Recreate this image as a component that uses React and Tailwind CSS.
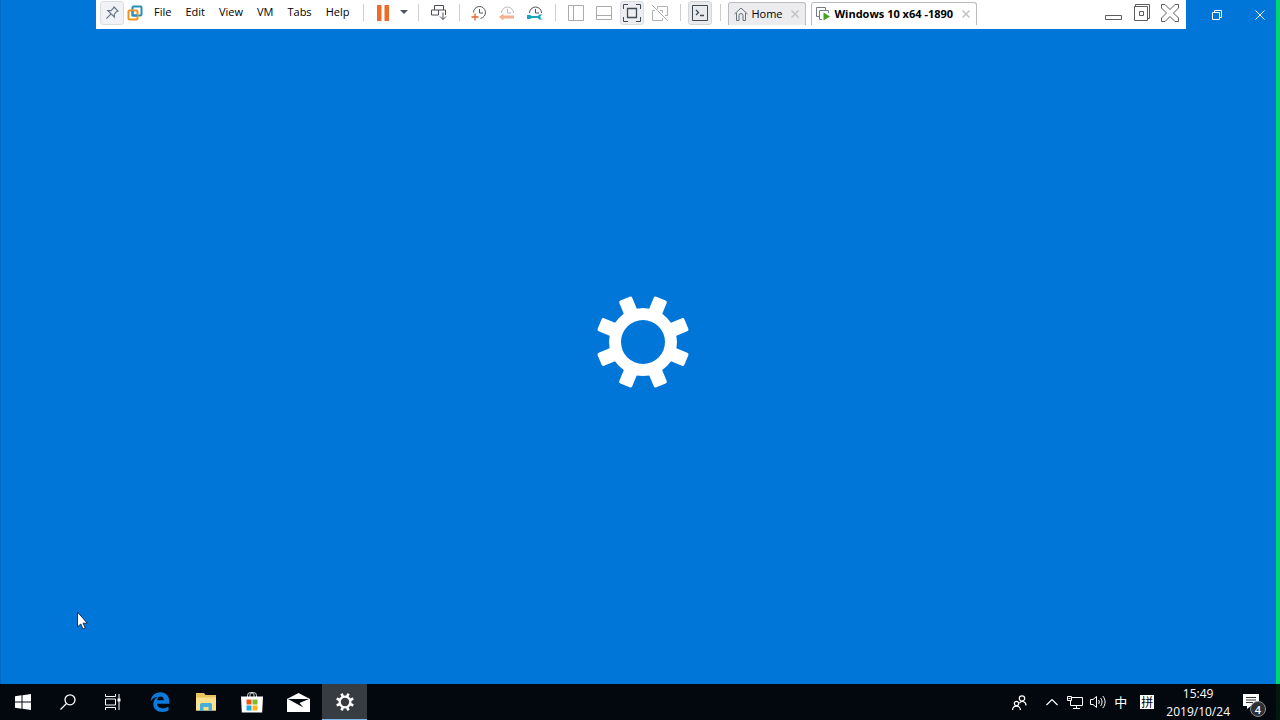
const MENUS = ["File", "Edit", "View", "VM", "Tabs", "Help"];

function Gear({ size }) {
  return (
    <svg width={size} height={size} viewBox="-47 -47 94 94" fill="none">
      <mask id={`hole-${size}`} maskUnits="userSpaceOnUse" x="-47" y="-47" width="94" height="94">
        <rect x="-47" y="-47" width="94" height="94" fill="#fff" />
        <circle r="22" fill="#000" />
      </mask>
      <g fill="#fff" mask={`url(#hole-${size})`}>
        <circle r="34" />
        <rect x="-7" y="-47" width="14" height="94" rx="2" transform="rotate(22.5)" />
        <rect x="-7" y="-47" width="14" height="94" rx="2" transform="rotate(67.5)" />
        <rect x="-7" y="-47" width="14" height="94" rx="2" transform="rotate(112.5)" />
        <rect x="-7" y="-47" width="14" height="94" rx="2" transform="rotate(157.5)" />
      </g>
    </svg>
  );
}

function Divider() {
  return <span className="h-[17px] w-px shrink-0 bg-[#cfcfcf]" />;
}

function Tool({ label, className = "w-7", children }) {
  return (
    <button
      type="button"
      aria-label={label}
      className={`flex h-6 shrink-0 items-center justify-center ${className}`}
    >
      {children}
    </button>
  );
}

function TabClose() {
  return (
    <button type="button" aria-label="Close tab" className="flex size-4 items-center justify-center">
      <svg width="8" height="8" viewBox="0 0 8 8" stroke="#c2c2c2" strokeWidth="1.5">
        <path d="M.5.5l7 7M7.5.5l-7 7" />
      </svg>
    </button>
  );
}

function Toolbar() {
  return (
    <div className="flex h-[29px] min-w-0 flex-1 items-center bg-white pb-1 pl-1 font-['Open_Sans','Noto_Sans',sans-serif] text-[11px] text-black">
      <Tool label="Pin toolbar" className="w-6 rounded-[3px] border border-[#dcdde1] bg-[#f1f2f5]">
        <svg width="14" height="14" viewBox="0 0 14 14" fill="none" stroke="#66758a" strokeWidth="1.2">
          <path d="M9 1l4 4-1.5.7-2.2 2.4.1 3L2.9 4.600l3 .1L8.200 2.500zM5.800 8.200L1.300 12.700" />
        </svg>
      </Tool>
      <span className="flex w-[22px] justify-center">
        <svg width="16" height="16" viewBox="0 0 16 16" fill="none" strokeWidth="2">
          <rect x="5.5" y="1.5" width="9" height="9" rx="1" stroke="#2d8cba" />
          <rect x="1.5" y="5.500" width="9" height="9" rx="1" stroke="#f0941e" />
          <path d="M5.500 6v4.500H10" stroke="#2d8cba" />
        </svg>
      </span>
      <nav className="flex gap-3.5 pr-3.5 pl-2">
        {MENUS.map(menu => (
          <button type="button" key={menu}>
            {menu}
          </button>
        ))}
      </nav>
      <Divider />
      <Tool label="Suspend" className="w-[38px]">
        <svg width="12" height="16" viewBox="0 0 12 16" fill="#ee6b2b">
          <path d="M0 0h4.500v16H0zM7.500 0H12v16H7.500z" />
        </svg>
      </Tool>
      <Tool label="Power options" className="w-4 justify-start pb-px">
        <svg width="8" height="4" viewBox="0 0 8 4" fill="#4c5560" className="-ml-0.5">
          <path d="M0 0h8L4 4z" />
        </svg>
      </Tool>
      <Divider />
      <Tool label="Send Ctrl+Alt+Del" className="w-10">
        <svg width="16" height="16" viewBox="0 0 16 16" fill="none" stroke="#4b4b57">
          <path d="M3.500 5V.500h9V5M.500 5h7v5h-7zM7.500 5h7v5M12 7.500v7M9 11.500l3 3 3-3" />
        </svg>
      </Tool>
      <Divider />
      <span className="w-[5px]" />
      <Tool label="Take snapshot">
        <svg width="16" height="16" viewBox="0 0 16 16" fill="none">
          <path d="M2.500 7.500A6 6 0 1 1 9.500 13.400M8.500 4v4H12" stroke="#555a60" />
          <path d="M4 8.500v7M.500 12h7" stroke="#e2622c" strokeWidth="1.3" />
        </svg>
      </Tool>
      <Tool label="Revert snapshot">
        <svg width="16" height="16" viewBox="0 0 16 16" fill="none">
          <path d="M2.500 8a6 6 0 0 1 12 0M8.500 4v4H12" stroke="#b5b7ba" />
          <path d="M0 12l4.500-3.500v2H15v3H4.500v2z" fill="#f4b091" />
        </svg>
      </Tool>
      <Tool label="Manage snapshots">
        <svg width="16" height="16" viewBox="0 0 16 16" fill="none">
          <path d="M2.500 8a6 6 0 0 1 12 0M8.500 4v4H12" stroke="#4b5058" />
          <path d="M0 10h3l2 1h6l1-1.500h3.500l-2 1.500v2l2 1.500H12l-1-1.500H5l-2 1H0z" fill="#1aa5bd" />
        </svg>
      </Tool>
      <span className="w-1.5" />
      <Divider />
      <span className="w-1.5" />
      <Tool label="Show library">
        <svg width="16" height="16" viewBox="0 0 16 16" fill="none" stroke="#a9abae">
          <path d="M.500.500h15v15H.500zM5.500.500v15" />
        </svg>
      </Tool>
      <Tool label="Show thumbnail bar">
        <svg width="16" height="16" viewBox="0 0 16 16" fill="none" stroke="#a9abae">
          <path d="M.500 1.500h15v13H.500zM.500 10.500h15" />
        </svg>
      </Tool>
      <span className="w-0.5" />
      <Tool label="Full screen" className="w-6 rounded-[3px] border border-[#dcdde1] bg-[#eceef1]">
        <svg width="18" height="18" viewBox="0 0 18 18" fill="none" stroke="#414b55">
          <path d="M.500 5V.500H5M13 .500h4.500V5M17.500 13v4.500H13M5 17.500H.500V13" />
          <path d="M4.500 4.500h9v9h-9z" strokeWidth="1.3" />
        </svg>
      </Tool>
      <span className="w-0.5" />
      <Tool label="Unity">
        <svg width="16" height="16" viewBox="0 0 16 16" fill="none" stroke="#aeb0b2">
          <path d="M5.500 4V1.500h10v9H13M3 5.500H.500v10h10V13M8 5.500h2.500V8M0 0l16 16" />
        </svg>
      </Tool>
      <span className="w-1.5" />
      <Divider />
      <span className="w-[7px]" />
      <Tool label="Console view" className="w-6 rounded-[3px] border border-[#d3d5d9] bg-[#e8eaee]">
        <svg width="16" height="16" viewBox="0 0 16 16" fill="none" stroke="#3f4a54">
          <path d="M.500.500h15v15H.500z" />
          <path d="M4 5l2.500 2.500L4 10M8 10.500h4" strokeWidth="1.3" />
        </svg>
      </Tool>
      <span className="w-2" />
      <Divider />
      <div className="ml-[7px] flex shrink-0 gap-[5px] self-end">
        <div className="flex h-[23px] w-[78px] items-center rounded-t-[3px] border border-b-0 border-[#b9bbc0] bg-[#ececef] pl-[5px]">
          <svg width="14" height="14" viewBox="0 0 14 14" fill="none" stroke="#67717b">
            <path d="M.500 7L7 1l6.500 6M2.500 6v7.500H5v-5a2 2 0 0 1 4 0v5h2.500V6" />
          </svg>
          <button type="button" className="flex-1 pl-[3px] text-left">Home</button>
          <TabClose />
          <span className="w-0.5" />
        </div>
        <div className="flex h-[23px] w-[166px] items-center rounded-t-[3px] border border-b-0 border-[#b9bbc0] bg-white pl-1">
          <svg width="15" height="14" viewBox="0 0 15 14" fill="none" stroke="#747d86">
            <path d="M3 9.500H.500v-9h9V3M12.500 6V3.500h-9v9H6" />
            <path d="M7.500 5.500v8l6.500-4z" fill="#3fa41c" stroke="none" />
          </svg>
          <button type="button" className="flex-1 pl-[3px] text-left font-bold whitespace-nowrap">
            Windows 10 x64 -1890
          </button>
          <TabClose />
          <span className="w-0.5" />
        </div>
      </div>
      <div className="ml-auto flex pr-0.5">
        <Tool label="Minimize">
          <svg width="18" height="18" viewBox="0 0 18 18" fill="none" stroke="#5d5d5d">
            <path d="M.500 11.500h16v4H.500z" />
          </svg>
        </Tool>
        <Tool label="Restore">
          <svg width="18" height="18" viewBox="0 0 18 18" fill="none" stroke="#5d5d5d">
            <path d="M1.500 2.500h13v14h-13zM6.500 7.500h4v4h-4zM2.500 2.500v-2h14v14h-2" />
          </svg>
        </Tool>
        <Tool label="Close">
          <svg width="18" height="18" viewBox="0 0 18 18" fill="none" stroke="#5d5d5d">
            <path d="M.500.500H4l5 5 5-5h3.500V4l-5 5 5 5v3.500H14l-5-5-5 5H.500V14l5-5-5-5z" />
          </svg>
        </Tool>
      </div>
    </div>
  );
}

function Cursor() {
  return (
    <svg width="12" height="19" viewBox="0 0 12 19" className="absolute bottom-[54px] left-[75px]">
      <path d="M1.500 1v15l3.300-3 2.200 5 2.300-1-2.200-4.800h4.200z" fill="#fff" stroke="#17324d" />
    </svg>
  );
}

function TaskButton({ label, className = "w-[46px]", children }) {
  return (
    <button type="button" aria-label={label} className={`flex h-9 items-center justify-center ${className}`}>
      {children}
    </button>
  );
}

function Taskbar() {
  return (
    <footer className="flex h-9 items-center border-r-4 border-[#03190f] bg-[#03080f] text-white">
      <TaskButton label="Start" className="w-[45px]">
        <svg width="16" height="16" viewBox="0 0 16 16" fill="#fff">
          <path d="M0 2.300l6.500-1v6.200H0zM7.500 1.200L16 0v7.500H7.500zM0 8.500h6.500v6.200l-6.500-1zM7.500 8.500H16V16l-8.500-1.200z" />
        </svg>
      </TaskButton>
      <TaskButton label="Search" className="w-[45px]">
        <svg width="16" height="16" viewBox="0 0 16 16" fill="none" stroke="#fff" strokeWidth="1.3">
          <circle cx="10" cy="5.800" r="5" />
          <path d="M6.500 9.500l-6 6" />
        </svg>
      </TaskButton>
      <TaskButton label="Task View" className="w-[45px]">
        <svg width="16" height="16" viewBox="0 0 16 16" fill="none" stroke="#fff">
          <path d="M.500 0v2.500h10V0M.500 5h10v6H.500zM.500 16v-2.500h10V16M14 0v16" />
          <path d="M12.500 4.500h3v3h-3z" fill="#fff" stroke="none" />
        </svg>
      </TaskButton>
      <div className="ml-0.5 flex">
        <TaskButton label="Microsoft Edge">
          <svg width="20" height="20" viewBox="0 0 20 20" fill="#0a7bdc">
            <path d="M.7 9.200C1.200 4 5 .3 10.300.3c5.700 0 9 4 9 9.200v2.200H7c.2 3.300 3 4.500 6 4.500 2.100 0 4-.6 5.500-1.500v3.900c-1.700.9-3.700 1.300-6 1.300-5.500 0-9.200-3.100-9.200-8 0-3.200 1.800-5.800 4.600-7.200C4.800 5 2.300 6.500.7 9.200zM7.200 8.200h6.600c0-2.200-1.100-3.700-3.200-3.700S7.400 6 7.200 8.200z" />
          </svg>
        </TaskButton>
        <TaskButton label="File Explorer">
          <svg width="20" height="18" viewBox="0 0 20 18">
            <path d="M0 0h8l1.500 2H20v15.500H0z" fill="#e9c35f" />
            <path d="M0 4.500h20v13H0z" fill="#fbe08d" />
            <path d="M4 18v-6.500A1.500 1.500 0 0 1 5.500 10h9a1.500 1.500 0 0 1 1.500 1.500V18h-3.500v-4h-5v4z" fill="#47addb" />
          </svg>
        </TaskButton>
        <TaskButton label="Microsoft Store">
          <svg width="22" height="22" viewBox="0 0 22 22">
            <path d="M6.500 6V4.500a3 3 0 0 1 3-3h3a3 3 0 0 1 3 3V6M9 6V4a2 2 0 0 1 4 0v2" fill="none" stroke="#d9d9d9" />
            <path d="M0 5.500h22l-.8 16H.8z" fill="#fff" />
            <path d="M5.500 8.500h5v5h-5z" fill="#f1511b" />
            <path d="M11.500 8.500h5v5h-5z" fill="#80b928" />
            <path d="M5.500 14.500h5v5h-5z" fill="#1babe8" />
            <path d="M11.500 14.500h5v5h-5z" fill="#fbb713" />
          </svg>
        </TaskButton>
        <TaskButton label="Mail">
          <svg width="23" height="19" viewBox="0 0 23 19">
            <path d="M0 6l11.500-6L23 6v13H0z" fill="#fff" />
            <path d="M1 6h21l-9.500 4 4 4.500z" fill="#03080f" />
          </svg>
        </TaskButton>
        <TaskButton label="Settings" className="ml-px w-[45px] border-b border-[#76b9ed] bg-[#373b42]">
          <Gear size={18} />
        </TaskButton>
      </div>

      <div className="ml-auto flex items-center pr-2.5">
        <button type="button" aria-label="People" className="mr-[19px]">
          <svg width="15" height="15" viewBox="0 0 15 15" fill="none" stroke="#fff" strokeWidth="1.2">
            <circle cx="10" cy="3.500" r="2.700" />
            <circle cx="4.500" cy="8.500" r="2.200" />
            <path d="M.6 15c0-5.200 7.800-5.200 7.800 0M7.500 8c2.500-2.800 6.500-1.500 6.500 2.500" />
          </svg>
        </button>
        <button type="button" aria-label="Show hidden icons" className="mr-[9px]">
          <svg width="12" height="8" viewBox="0 0 12 8" fill="none" stroke="#fff" strokeWidth="1.2">
            <path d="M.500 7L6 1.500 11.500 7" />
          </svg>
        </button>
        <button type="button" aria-label="Network" className="mr-[7px]">
          <svg width="16" height="13" viewBox="0 0 16 13" fill="none" stroke="#fff">
            <path d="M5 1.500h10.500v8h-12V5M9.500 9.500v3M6 12.500h7" />
            <path d="M.500.500h4v4h-4zM1.500 2.500h2" />
          </svg>
        </button>
        <button type="button" aria-label="Volume" className="mr-2">
          <svg width="16" height="14" viewBox="0 0 16 14" fill="none" stroke="#fff">
            <path d="M.500 4.500H3l3.500-3v11L3 9.500H.500zM8.500 5c1 1 1 3 0 4M10.500 3c2 2.200 2 5.800 0 8M12.800 1c3 3.500 3 8.500 0 12" />
          </svg>
        </button>
        <button type="button" className="mr-[13px] font-['Noto_Sans_CJK_SC',sans-serif] text-[13px] leading-4">
          中
        </button>
        <button
          type="button"
          className="mr-3 flex size-[14px] items-center justify-center bg-white font-['Noto_Sans_CJK_SC',sans-serif] text-[12px] leading-[14px] text-black"
        >
          拼
        </button>
        <button
          type="button"
          className="mr-[13px] pt-px text-center font-['Open_Sans','Noto_Sans',sans-serif] text-[12px] leading-[18px] whitespace-nowrap"
        >
          <span className="block">15:49</span>
          <span className="block">2019/10/24</span>
        </button>
        <button
          type="button"
          aria-label="Notifications, 4 new"
          className="relative flex h-[30px] w-[23px] items-start pt-[7px]"
        >
          <svg width="16" height="15" viewBox="0 0 16 15">
            <path d="M0 0h16v12H8l-4 3v-3H0z" fill="#fff" />
            <path d="M3 3.500h10M3 6h10M3 8.500h7" stroke="#333" />
          </svg>
          <span className="absolute right-0 bottom-0 flex size-4 items-center justify-center rounded-full border border-[#8b8d90] bg-[#2d3034] font-['Open_Sans',sans-serif] text-[11px] leading-none font-semibold">
            4
          </span>
        </button>
      </div>
    </footer>
  );
}

export default function App() {
  return (
    <div className="flex min-h-screen flex-col overflow-hidden bg-[#0076d9]">
      <div className="flex flex-1">
        <main className="relative flex min-w-0 flex-1 flex-col border-l border-[#0069c4]">
          <div className="flex pl-[95px]">
            <Toolbar />
            <div className="flex w-[90px] shrink-0 items-center justify-end">
              <button type="button" aria-label="Restore window" className="flex h-7 w-[54px] items-center justify-center">
                <svg width="10" height="10" viewBox="0 0 10 10" fill="none" stroke="#fff">
                  <path d="M.500 2.500h7v7h-7zM2.500 2.500v-2h7v7h-2" />
                </svg>
              </button>
              <button type="button" aria-label="Close window" className="flex h-7 w-8 items-center justify-center">
                <svg width="10" height="10" viewBox="0 0 10 10" fill="none" stroke="#fff">
                  <path d="M.500.500l9 9M9.500.500l-9 9" />
                </svg>
              </button>
            </div>
          </div>
          <div className="flex flex-1 items-center justify-center pb-[29px] pl-2">
            <Gear size={94} />
          </div>
          <Cursor />
        </main>
        <div className="w-1 bg-[#00d573]" />
      </div>
      <Taskbar />
    </div>
  );
}
